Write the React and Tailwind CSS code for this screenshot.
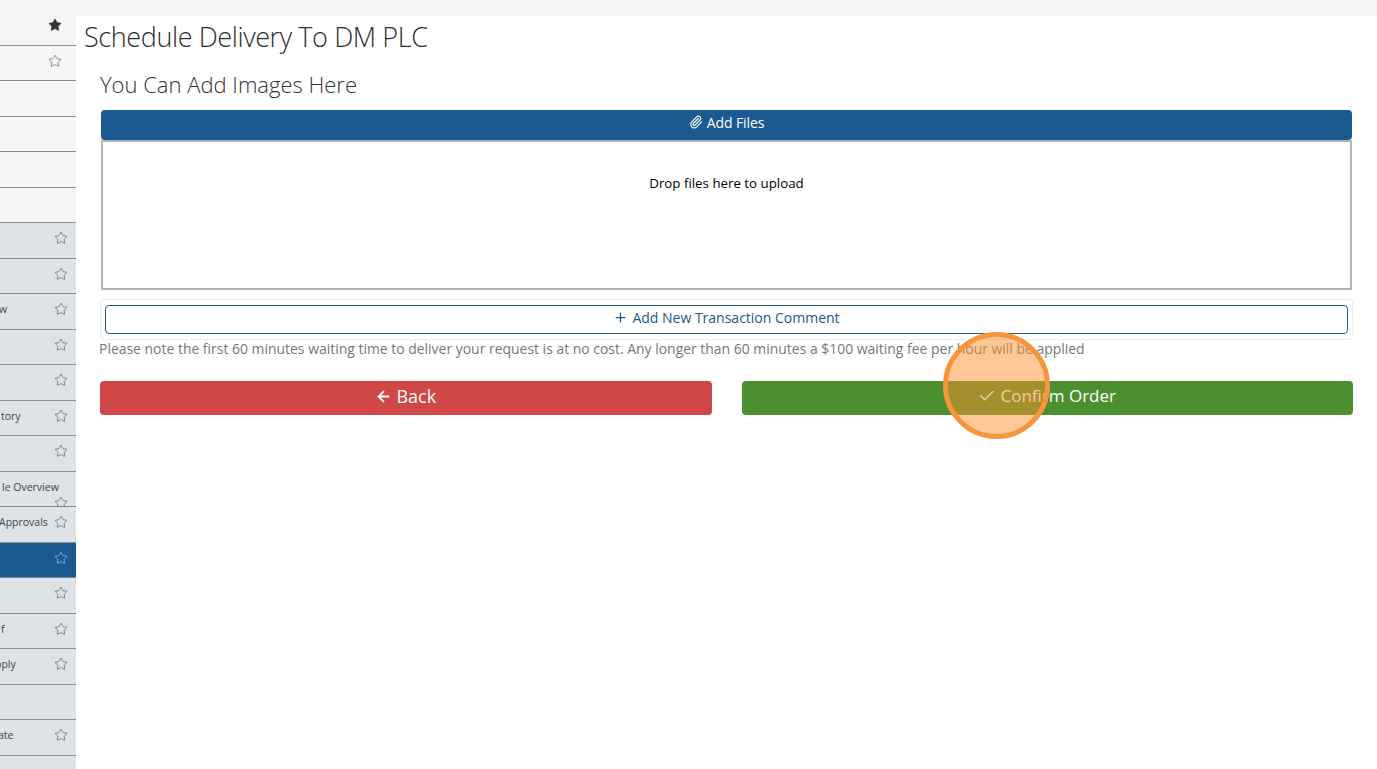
import React from "react";
import { ArrowLeft, Check, Paperclip, Plus, Star } from "lucide-react";

// Sidebar rows, scrolled partly out of view on the left
const SIDE_ROWS = [
  { h: "h-[29.5px]", star: "filled", tone: "light" },
  { star: "shifted", tone: "light" },
  { tone: "light" },
  { tone: "light" },
  { tone: "light" },
  { tone: "light" },
  { star: "normal" },
  { star: "normal" },
  { label: "w", pad: "-ml-px", star: "normal" },
  { star: "normal" },
  { star: "normal" },
  { label: "tory", pad: "ml-px", star: "normal" },
  { star: "normal" },
  { label: "le Overview", pad: "ml-[2px]", star: "low" },
  { label: "Approvals", pad: "-ml-px", star: "normal" },
  { star: "normal", tone: "active" },
  { star: "normal" },
  { label: "f", pad: "ml-px", star: "normal" },
  { label: "pply", pad: "-ml-[5px]", star: "normal" },
  {},
  { label: "ate", pad: "-ml-[2px]", star: "normal" },
  { h: "h-[14px]" },
];

const SideRow = ({ row }) => {
  const bg =
    row.tone === "light"
      ? "bg-[#f5f5f5] border-[#8d8d8d]"
      : row.tone === "active"
        ? "bg-[#1a5a91] border-[#6f8ba5]"
        : "bg-[#dfe2e7] border-[#8d8d8d]";

  return (
    <div className={`relative flex items-center border-b ${bg} ${row.h || "h-[35.5px]"} shrink-0`}>
      {row.label && (
        <span className={`${row.pad} -mt-[4px] text-[10.5px] leading-none whitespace-nowrap text-[#444]`}>
          {row.label}
        </span>
      )}
      {row.star === "filled" && (
        <Star size={14} strokeWidth={1.25} className="absolute left-[48px] top-[2px] fill-[#333] text-[#333]" />
      )}
      {row.star === "shifted" && (
        <Star size={14} strokeWidth={1} className="absolute left-[48px] top-[8px] text-[#444]" />
      )}
      {row.star === "normal" && (
        <Star
          size={14}
          strokeWidth={1}
          className={`absolute left-[54px] top-[8px] ${row.tone === "active" ? "text-[#cfe3f5]" : "text-[#444]"}`}
        />
      )}
      {row.star === "low" && (
        <Star size={14} strokeWidth={1} className="absolute left-[54px] top-[24px] text-[#444]" />
      )}
    </div>
  );
};

const App = () => {
  return (
    <div className="relative h-[769px] w-[1377px] overflow-hidden bg-white font-['Open_Sans',sans-serif]">
      <div className="h-4 bg-[#f5f5f5]" />
      <div className="flex">
        <div className="w-[76px] shrink-0 overflow-hidden h-[753px] flex flex-col">
          {SIDE_ROWS.map((row, i) => (
            <SideRow key={i} row={row} />
          ))}
        </div>

        <div className="flex-1 min-w-0">
          <h1 className="ml-2 mt-[4px] text-[27px] leading-[34px] font-light tracking-[-0.4px] text-[#2e2e2e]">
            Schedule Delivery To DM PLC
          </h1>

          <div className="ml-6 mr-6 mt-[16px]">
            <h2 className="text-[22px] leading-7 font-light text-[#333]">You Can Add Images Here</h2>

            <div className="ml-px mr-px mt-[12px]">
              <div className="flex h-[30px] items-center justify-center gap-1 rounded-[4px] bg-[#1a5a91] pb-[6px] text-[14px] tracking-[-0.1px] text-white">
                <Paperclip size={14} />
                Add Files
              </div>
              <div className="flex h-[150px] justify-center border-2 border-[#b5b5b5] pt-[31px] text-[13.3px] leading-5 text-black">
                Drop files here to upload
              </div>
            </div>

            <div className="mt-[9px] rounded-[4px] border border-[#e9e9e9] px-[4px] py-[5px]">
              <div className="flex h-[29px] items-center justify-center gap-1 rounded-[4px] border border-[#2c5a75] pb-1 text-[14px] text-[#1a5a85]">
                <Plus size={15} />
                Add New Transaction Comment
              </div>
            </div>

            <p className="-ml-px -mt-px text-[13.95px] leading-5 whitespace-nowrap text-[#777]">
              Please note the first 60 minutes waiting time to deliver your request is at no cost. Any longer than 60
              minutes a $100 waiting fee per hour will be applied
            </p>

            <div className="mt-[22px] flex gap-[30px]">
              <button className="flex h-[34px] flex-1 items-center justify-center gap-1 rounded-[4px] bg-[#d14747] pb-1 text-[18px] text-white">
                <ArrowLeft size={17} strokeWidth={2.5} />
                Back
              </button>
              <button className="flex h-[34px] flex-1 items-center justify-center gap-1 rounded-[4px] bg-[#4c8f2f] pb-1 text-[17px] text-white">
                <Check size={18} />
                Confirm Order
              </button>
            </div>
          </div>
        </div>
      </div>

      {/* click highlight over the confirm button */}
      <div className="absolute left-[943px] top-[332px] h-[107px] w-[107px] rounded-full border-[5px] border-[#f7953b] bg-[#fb8f2f]/50" />
    </div>
  );
};

export default App;
